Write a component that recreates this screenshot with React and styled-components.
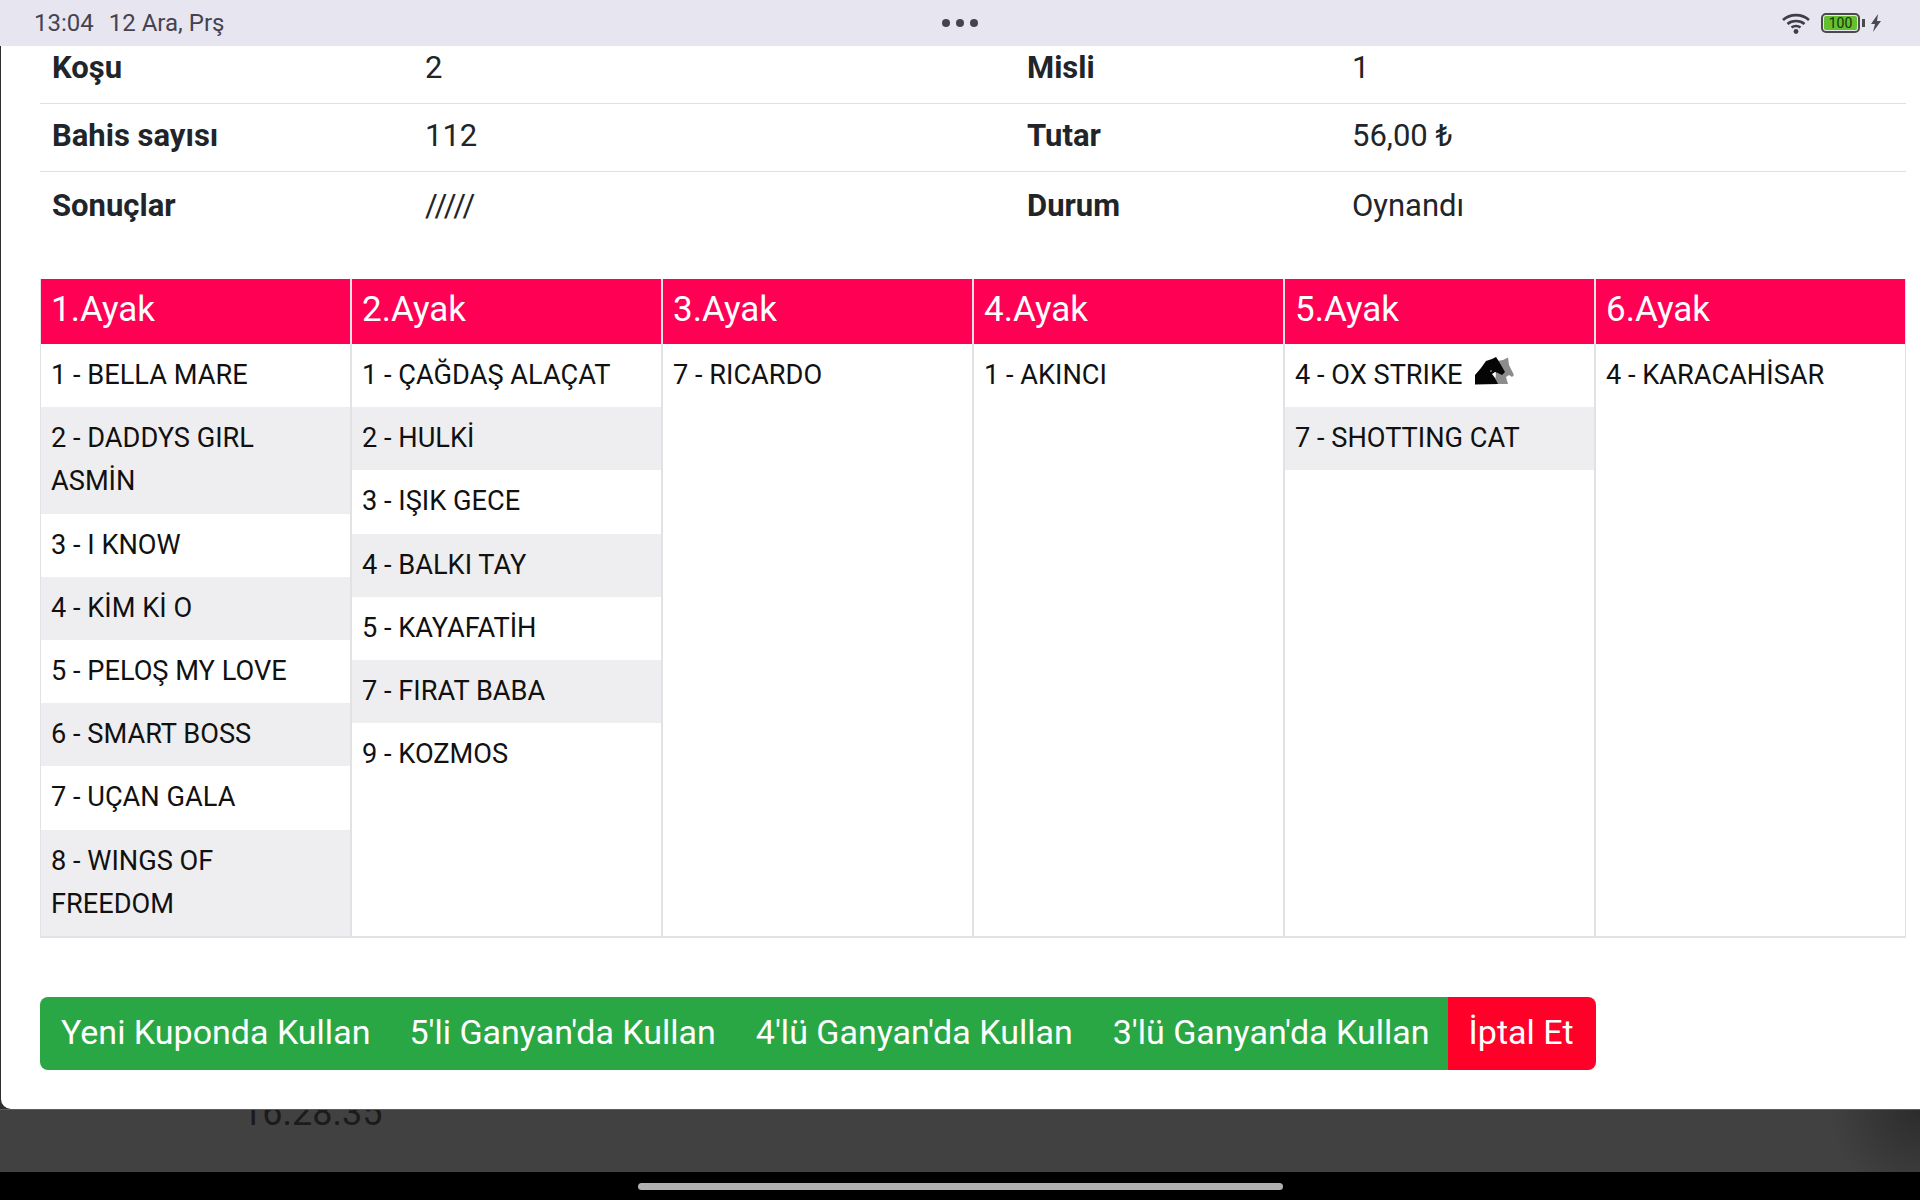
import styled, { createGlobalStyle } from "styled-components";

const GlobalStyle = createGlobalStyle`
  html, body {
    margin: 0;
    padding: 0;
    background: #000;
  }
  * {
    box-sizing: border-box;
  }
`;

const info = [
  ["Koşu", "2", "Misli", "1"],
  ["Bahis sayısı", "112", "Tutar", "56,00 ₺"],
  ["Sonuçlar", "/////", "Durum", "Oynandı"],
];

const legs = [
  {
    title: "1.Ayak",
    horses: [
      "1 - BELLA MARE",
      "2 - DADDYS GIRL ASMİN",
      "3 - I KNOW",
      "4 - KİM Kİ O",
      "5 - PELOŞ MY LOVE",
      "6 - SMART BOSS",
      "7 - UÇAN GALA",
      "8 - WINGS OF FREEDOM",
    ],
  },
  {
    title: "2.Ayak",
    horses: [
      "1 - ÇAĞDAŞ ALAÇAT",
      "2 - HULKİ",
      "3 - IŞIK GECE",
      "4 - BALKI TAY",
      "5 - KAYAFATİH",
      "7 - FIRAT BABA",
      "9 - KOZMOS",
    ],
  },
  { title: "3.Ayak", horses: ["7 - RICARDO"] },
  { title: "4.Ayak", horses: ["1 - AKINCI"] },
  { title: "5.Ayak", horses: ["4 - OX STRIKE", "7 - SHOTTING CAT"], icon: 0 },
  { title: "6.Ayak", horses: ["4 - KARACAHİSAR"] },
];

const actions = [
  "Yeni Kuponda Kullan",
  "5'li Ganyan'da Kullan",
  "4'lü Ganyan'da Kullan",
  "3'lü Ganyan'da Kullan",
];

const Horses = () => (
  <HorseIcon viewBox="0 0 40 28">
    <path
      fill="#8c8c8c"
      d="M22 4l6-1 5-2.500 1 7.500 5 10-2 2-3-2-3 2 2 7H20z"
    />
    <path
      fill="#050505"
      d="M0 27.500V18l6-7 5-7 6-2 4-2 2 3 3 5 4 7-3 3-4-2-3-1-3 2 3 4 3 6z"
    />
    <circle cx="16" cy="14" r="1" fill="#777" />
  </HorseIcon>
);

const App = () => {
  return (
    <Page>
      <GlobalStyle />
      <StatusBar>
        <Clock>
          <span>13:04</span>
          <span>12 Ara, Prş</span>
        </Clock>
        <Dots>
          <i />
          <i />
          <i />
        </Dots>
        <StatusIcons>
          <svg width="30" height="22" viewBox="0 0 30 22">
            <g fill="none" stroke="#3f3d4a" strokeWidth="2.6">
              <path d="M2 8c7-6.500 19-6.500 26 0" />
              <path d="M6.500 12c4.500-4 12.500-4 17 0" />
              <path d="M10.500 15.500c2.500-2 6.500-2 9 0" />
            </g>
            <circle cx="15" cy="19.500" r="2.400" fill="#3f3d4a" />
          </svg>
          <Battery>
            <span>100</span>
          </Battery>
          <svg width="12" height="20" viewBox="0 0 12 20">
            <path fill="#4b4956" d="M8 1L1 11h4l-2 8 8-11H7z" />
          </svg>
        </StatusIcons>
      </StatusBar>
      <Modal>
        <InfoTable>
          {info.map((row) => (
            <InfoRow key={row[0]}>
              <InfoLabel>{row[0]}</InfoLabel>
              <InfoValue>{row[1]}</InfoValue>
              <InfoLabel>{row[2]}</InfoLabel>
              <InfoValue>{row[3]}</InfoValue>
            </InfoRow>
          ))}
        </InfoTable>
        <Legs>
          {legs.map((leg) => (
            <Leg key={leg.title}>
              <LegTitle>{leg.title}</LegTitle>
              {leg.horses.map((horse, i) => (
                <Horse key={horse}>
                  {horse}
                  {leg.icon === i && <Horses />}
                </Horse>
              ))}
            </Leg>
          ))}
        </Legs>
        <Actions>
          {actions.map((label) => (
            <Action key={label}>{label}</Action>
          ))}
          <Cancel>İptal Et</Cancel>
        </Actions>
      </Modal>
      <Backdrop>
        <BehindTime>16.28.35</BehindTime>
      </Backdrop>
      <NavBar>
        <HomeBar />
      </NavBar>
    </Page>
  );
};

const Page = styled.div`
  width: 1920px;
  height: 1200px;
  overflow: hidden;
  display: flex;
  flex-direction: column;
  font-family: Roboto, "Liberation Sans", sans-serif;
  background: #2e2e2e;
`;

const StatusBar = styled.div`
  flex: 0 0 46px;
  position: relative;
  z-index: 1;
  display: flex;
  align-items: center;
  justify-content: space-between;
  padding: 0 38px 0 34px;
  background: #e7e5f0;
  color: #45434f;
`;

const Clock = styled.div`
  display: flex;
  gap: 15px;
  font-size: 24px;
  width: 400px;
`;

const Dots = styled.div`
  display: flex;
  gap: 6px;
  margin-left: 4px;
  i {
    width: 8px;
    height: 8px;
    border-radius: 50%;
    background: #45434f;
  }
`;

const StatusIcons = styled.div`
  width: 400px;
  display: flex;
  align-items: center;
  justify-content: flex-end;
  gap: 9px;
`;

const Battery = styled.div`
  position: relative;
  width: 39px;
  height: 20px;
  padding: 1px;
  border: 2px solid #4a4a4a;
  border-radius: 5px;
  background: #65c02f content-box;
  display: flex;
  align-items: center;
  justify-content: center;
  margin: 0 1px 0 1px;
  span {
    font-size: 14px;
    color: #17330b;
  }
  &::after {
    content: "";
    position: absolute;
    right: -7px;
    top: 4px;
    width: 3px;
    height: 8px;
    background: #4a4a4a;
  }
`;

const Modal = styled.div`
  height: 1063px;
  margin-left: 1px;
  padding: 0 14px 0 39px;
  background: #fff;
  border-bottom-left-radius: 10px;
  overflow: hidden;
`;

const InfoTable = styled.div`
  margin-top: -10px;
`;

const InfoRow = styled.div`
  display: grid;
  grid-template-columns: 373px 602px 325px 1fr;
  height: 68px;
  padding-bottom: 4px;
  align-items: center;
  border-bottom: 1px solid #dee2e6;
  color: #212529;
  font-size: 31px;
  &:last-child {
    padding-bottom: 2px;
    border-bottom: none;
  }
`;

const InfoLabel = styled.div`
  padding-left: 12px;
  font-weight: 700;
`;

const InfoValue = styled.div`
  padding-left: 12px;
`;

const Legs = styled.div`
  display: grid;
  grid-template-columns: repeat(6, 311px);
  margin-top: 39px;
  height: 658px;
`;

const Leg = styled.div`
  border: 1px solid #e2e2e6;
  border-width: 0 1px 2px 1px;
`;

const LegTitle = styled.div`
  height: 65px;
  padding: 0 10px 5px;
  display: flex;
  align-items: center;
  background: #ff0055;
  color: #fff;
  font-size: 35px;
`;

const Horse = styled.div`
  padding: 10px;
  font-size: 27.2px;
  line-height: 43.2px;
  color: #111;
  background: #fff;
  &:nth-of-type(odd) {
    background: #eeeef0;
  }
`;

const HorseIcon = styled.svg`
  width: 40px;
  height: 28px;
  margin-left: 12px;
  vertical-align: -1px;
`;

const Actions = styled.div`
  display: flex;
  margin-top: 60px;
  height: 73px;
  width: 1556px;
  border-radius: 8px;
  overflow: hidden;
`;

const Action = styled.div`
  padding: 0 20px 4px;
  display: flex;
  align-items: center;
  white-space: nowrap;
  background: #2aa745;
  color: #fff;
  font-size: 34px;
  &:first-child {
    padding: 0 19px 4px 21px;
  }
  &:nth-child(4) {
    padding-right: 18px;
  }
`;

const Cancel = styled(Action)`
  flex: 1;
  padding-left: 21px;
  background: #ff0028;
`;

const Backdrop = styled.div`
  height: 63px;
  overflow: hidden;
  padding-left: 242px;
  border-top: 1px solid #5c5c5c;
  background: radial-gradient(circle at 100% 0, #2c2c2c, #414141 90px);
`;

const BehindTime = styled.div`
  margin-top: -17px;
  font-size: 36px;
  line-height: 40px;
  color: #1b1b1b;
`;

const NavBar = styled.div`
  flex: 1;
  background: #000;
  display: flex;
  justify-content: center;
  padding-top: 11px;
`;

const HomeBar = styled.div`
  width: 645px;
  height: 7px;
  border-radius: 4px;
  background: #b0b0b0;
`;

export default App;
